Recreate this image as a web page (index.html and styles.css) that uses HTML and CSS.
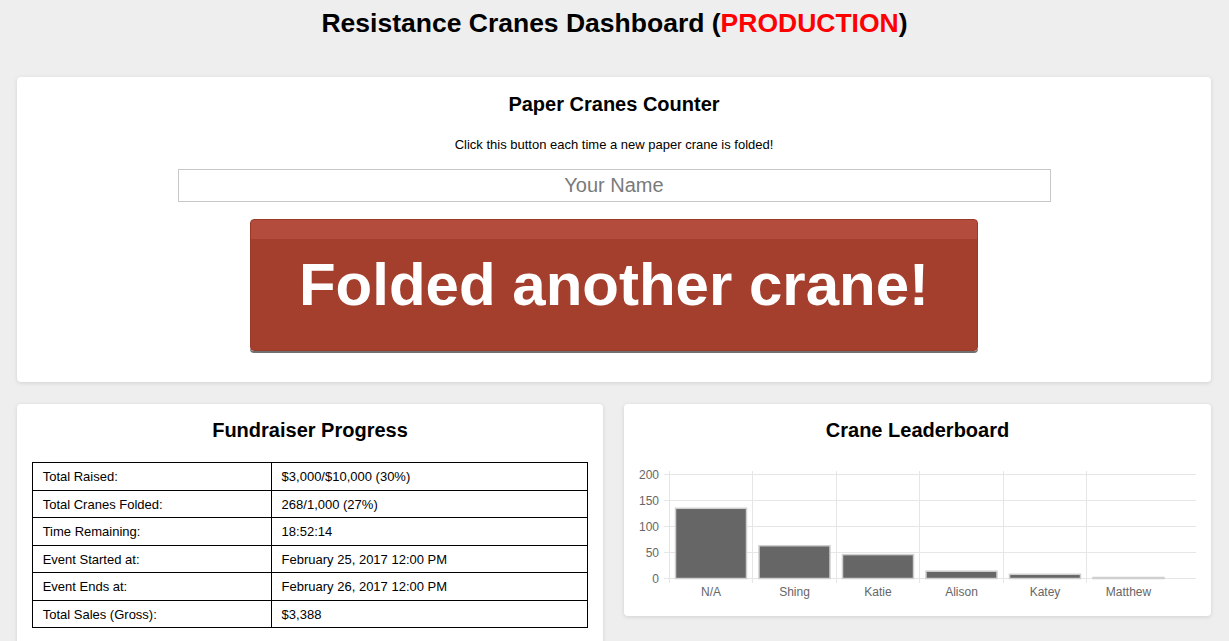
FILE: index.html
```html
<!DOCTYPE html>
<html>
<head>
<meta charset="utf-8">
<title>Resistance Cranes Dashboard</title>
<link rel="stylesheet" href="styles.css">
</head>
<body>
<h1 class="page-title">Resistance Cranes Dashboard (<span class="env">PRODUCTION</span>)</h1>

<section class="card counter">
  <h2 class="card-title">Paper Cranes Counter</h2>
  <p class="hint">Click this button each time a new paper crane is folded!</p>
  <input class="name-input" type="text" placeholder="Your Name">
  <button class="fold-btn">Folded another crane!</button>
</section>

<div class="row">
  <section class="card progress">
    <h2 class="card-title">Fundraiser Progress</h2>
    <table class="stats">
      <tr><td class="label">Total Raised:</td><td>$3,000/$10,000 (30%)</td></tr>
      <tr><td class="label">Total Cranes Folded:</td><td>268/1,000 (27%)</td></tr>
      <tr><td class="label">Time Remaining:</td><td>18:52:14</td></tr>
      <tr><td class="label">Event Started at:</td><td>February 25, 2017 12:00 PM</td></tr>
      <tr><td class="label">Event Ends at:</td><td>February 26, 2017 12:00 PM</td></tr>
      <tr><td class="label">Total Sales (Gross):</td><td>$3,388</td></tr>
    </table>
  </section>

  <section class="card leaderboard">
    <h2 class="card-title">Crane Leaderboard</h2>
    <svg class="chart" width="587" height="144" viewBox="0 0 587 144">
      <g class="grid">
        <line x1="40" y1="14.5" x2="572" y2="14.5"/>
        <line x1="40" y1="40.5" x2="572" y2="40.5"/>
        <line x1="40" y1="66.5" x2="572" y2="66.5"/>
        <line x1="40" y1="92.5" x2="572" y2="92.5"/>
        <line x1="40" y1="118.5" x2="572" y2="118.5"/>
        <line x1="45.5" y1="11" x2="45.5" y2="123"/>
        <line x1="128.5" y1="11" x2="128.5" y2="123"/>
        <line x1="212.5" y1="11" x2="212.5" y2="123"/>
        <line x1="295.5" y1="11" x2="295.5" y2="123"/>
        <line x1="379.5" y1="11" x2="379.5" y2="123"/>
        <line x1="462.5" y1="11" x2="462.5" y2="123"/>
      </g>
      <g class="ylabels">
        <text x="35" y="18.5">200</text>
        <text x="35" y="44.5">150</text>
        <text x="35" y="70.5">100</text>
        <text x="35" y="96.5">50</text>
        <text x="35" y="122.5">0</text>
      </g>
      <g class="bars">
        <rect x="51.5" y="48.3" width="71" height="70.2"/>
        <rect x="135" y="85.7" width="71" height="32.8"/>
        <rect x="218.5" y="94.6" width="71" height="23.9"/>
        <rect x="302" y="111.2" width="71" height="7.3"/>
        <rect x="385.5" y="114.3" width="71" height="4.2"/>
        <rect x="469" y="117.5" width="71" height="1"/>
      </g>
      <g class="xlabels">
        <text x="87" y="136">N/A</text>
        <text x="170.5" y="136">Shing</text>
        <text x="254" y="136">Katie</text>
        <text x="337.5" y="136">Alison</text>
        <text x="421" y="136">Katey</text>
        <text x="504.5" y="136">Matthew</text>
      </g>
    </svg>
  </section>
</div>
</body>
</html>
```

FILE: styles.css
```css
html, body {
  margin: 0;
  padding: 0;
}
body {
  background: #eeeeee;
  font-family: "Liberation Sans", Arial, Helvetica, sans-serif;
  color: #000;
}
.page-title {
  margin: 0 0 39px 0;
  padding-top: 8px;
  font-size: 26.5px;
  line-height: 30px;
  font-weight: bold;
  text-align: center;
}
.env {
  color: #ff0000;
}
.card {
  background: #fff;
  border-radius: 4px;
  box-shadow: 0 1px 4px rgba(0, 0, 0, 0.12);
  box-sizing: border-box;
}
.card-title {
  margin: 0;
  font-size: 20px;
  line-height: 24px;
  font-weight: bold;
  text-align: center;
}
.counter {
  margin: 0 18px 22px 17px;
  padding: 15px 0 29px;
  display: flex;
  flex-direction: column;
  align-items: center;
}
.hint {
  margin: 20px 0 0;
  font-size: 13px;
  line-height: 17px;
}
.name-input {
  margin-top: 16px;
  width: 873px;
  height: 33px;
  box-sizing: border-box;
  border: 1px solid #c8c8c8;
  border-radius: 0;
  padding: 0;
  font-family: "Liberation Sans", Arial, sans-serif;
  font-size: 20px;
  text-align: center;
  outline: none;
}
.name-input::placeholder {
  color: #7a7a7a;
}
.fold-btn {
  margin-top: 17px;
  width: 728px;
  height: 132px;
  box-sizing: border-box;
  border: 1px solid #9a3a2a;
  border-radius: 4px;
  background: linear-gradient(#b44c3d 0, #b44c3d 19px, #a43f2d 19px, #a43f2d 100%);
  box-shadow: 0 2px 0 #707070;
  color: #fff;
  font-family: "Liberation Sans", Arial, sans-serif;
  font-weight: bold;
  font-size: 60px;
  line-height: 60px;
  padding: 0;
  margin-bottom: 2px;
}
.row {
  margin: 0 18px 0 17px;
  display: grid;
  grid-template-columns: 1fr 1fr;
  gap: 21px;
  align-items: start;
}
.progress {
  padding: 14px 0 20px;
}
.stats {
  margin: 20px auto 0;
  width: 95%;
  border-collapse: collapse;
  font-size: 13px;
}
.stats td {
  border: 1px solid #000;
  padding: 2px 10px 0;
  height: 24.5px;
  line-height: 16px;
}
.stats td.label {
  width: 43%;
  box-sizing: border-box;
}
.leaderboard {
  padding: 14px 0 8px;
  height: 212px;
}
.chart {
  display: block;
  margin-top: 18px;
}
.grid line {
  stroke: #e6e6e6;
  stroke-width: 1;
}
.ylabels text {
  font-family: "Liberation Sans", Arial, sans-serif;
  font-size: 12px;
  fill: #666;
  text-anchor: end;
}
.xlabels text {
  font-family: "Liberation Sans", Arial, sans-serif;
  font-size: 12px;
  fill: #666;
  text-anchor: middle;
}
.bars rect {
  fill: #666666;
  stroke: #cfcfcf;
  stroke-width: 1.5;
}
```
